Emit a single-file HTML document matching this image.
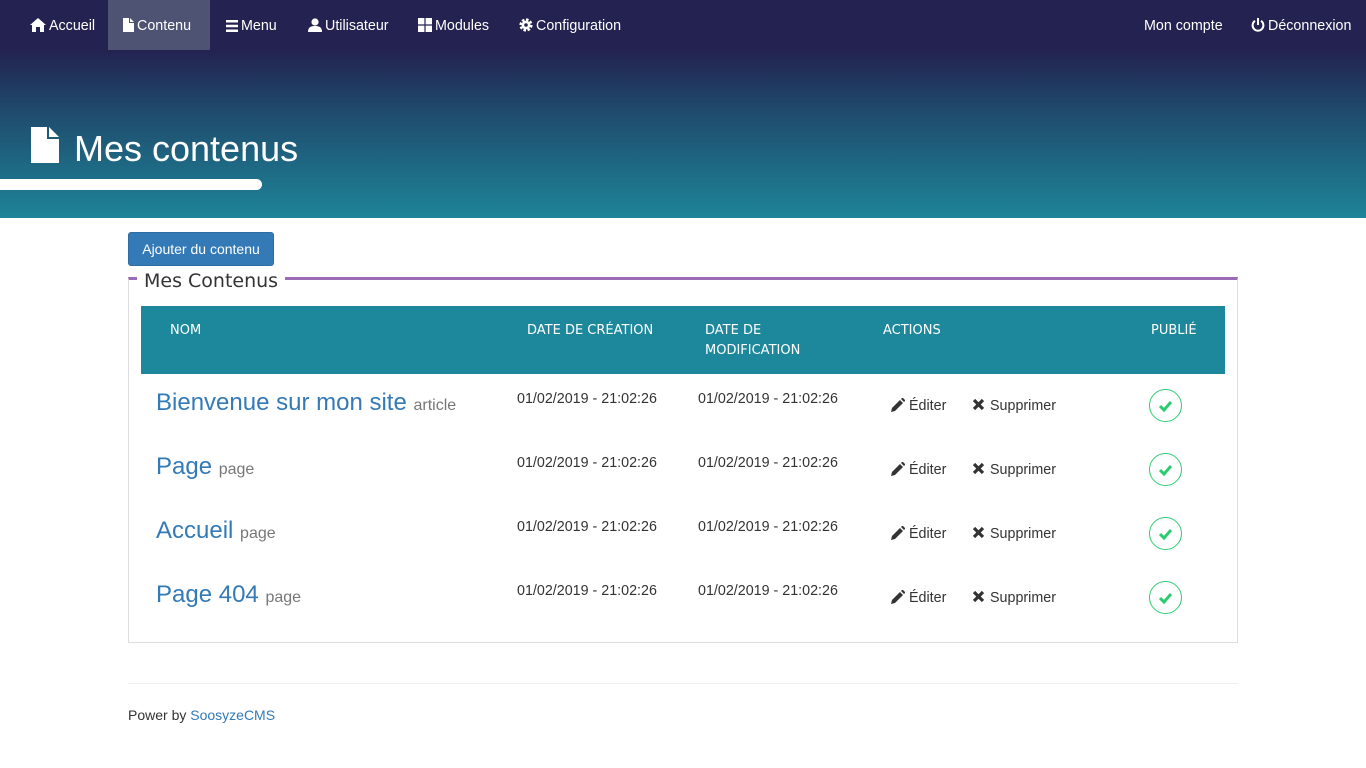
<!DOCTYPE html>
<html><head><meta charset="utf-8"><style>
*{margin:0;padding:0;box-sizing:border-box}
body{width:1366px;height:768px;font-family:"Liberation Sans",sans-serif;background:#fff;position:relative;overflow:hidden;color:#333;font-size:14px}
.hdr{position:absolute;left:0;top:0;width:1366px;height:218px;background:linear-gradient(#232250 0px,#232250 50px,#1f4a6c 110px,#1e8498 218px)}
.nav a{position:absolute;top:0;height:50px;line-height:52px;color:#fff;font-size:14.3px;text-decoration:none;white-space:nowrap}
.nav svg{vertical-align:-2px;margin-right:3px}
.act{background:#4f5373}
.bar{position:absolute;left:0;top:179px;width:262px;height:11px;background:#fff;border-radius:0 6px 6px 0}
h1{position:absolute;left:74px;top:128px;font-weight:normal;font-size:36px;color:#fff}
.btn{position:absolute;left:128px;top:232px;width:146px;height:34px;background:#337ab7;border:1px solid #2e6da4;border-radius:3px;color:#fff;font-size:14px;line-height:32px;text-align:center}
.box{position:absolute;left:128px;top:277px;width:1110px;height:366px;border:1px solid #ddd;border-top:3px solid #9b6bb5}
.leg{position:absolute;left:137px;top:269px;background:#fff;padding:0 7px;font-family:"DejaVu Sans",sans-serif;font-size:19px;color:#333;line-height:24px}
.th{position:absolute;left:141px;top:306px;width:1084px;height:68px;background:#1d889c}
.th span{position:absolute;top:15px;color:#fff;font-family:"DejaVu Sans",sans-serif;font-size:13px;line-height:20px}
.r{position:absolute;left:0;width:1366px;height:40px}
.t{position:absolute;left:156px;top:0;font-size:24px;color:#337ab7;white-space:nowrap}
.t small{font-size:16px;color:#777}
.d{position:absolute;top:0;font-size:14.3px;color:#333}
.e{position:absolute;top:8px;font-size:14.3px;color:#333}
.ok{position:absolute;left:1149px;top:0;width:33px;height:33px;border:1px solid #2ecc71;border-radius:50%}
.ft{position:absolute;left:128px;top:683px;width:1110px;border-top:1px solid #eee}
</style></head><body>
<div class="hdr"></div>
<div class="nav">
<a style="left:18px;padding:0 12px"><svg width="16" height="14" viewBox="0 0 16 14"><path d="M8 0L0 7h2v7h4V9h4v5h4V7h2z" fill="#fff"/></svg>Accueil</a>
<a class="act" style="left:108px;width:102px;padding-left:15px"><svg width="11" height="14" viewBox="0 0 11 14"><path d="M0 0h6v5h5v9H0zM7 0l4 4H7z" fill="#fff"/></svg>Contenu</a>
<a style="left:226px"><svg width="12" height="12" viewBox="0 0 12 12"><path d="M0 0h12v2.5H0zM0 4.75h12v2.5H0zM0 9.5h12V12H0z" fill="#fff"/></svg>Menu</a>
<a style="left:308px"><svg width="14" height="14" viewBox="0 0 14 14"><circle cx="7" cy="4" r="3.6" fill="#fff"/><path d="M0 14c0-5 3-6 7-6s7 1 7 6z" fill="#fff"/></svg>Utilisateur</a>
<a style="left:418px"><svg width="14" height="14" viewBox="0 0 14 14"><path d="M0 0h6.4v6.4H0zM7.6 0H14v6.4H7.6zM0 7.6h6.4V14H0zM7.6 7.6H14V14H7.6z" fill="#fff"/></svg>Modules</a>
<a style="left:519px"><svg width="14" height="14" viewBox="0 0 14 14"><circle cx="7" cy="7" r="5" fill="none" stroke="#fff" stroke-width="3.2" stroke-dasharray="2.4 1.5"/><circle cx="7" cy="7" r="4.4" fill="#fff"/><circle cx="7" cy="7" r="1.8" fill="#232250"/></svg>Configuration</a>
<a style="left:1144px">Mon compte</a>
<a style="left:1251px"><svg width="14" height="14" viewBox="0 0 14 14"><path d="M4 2.8A5.4 5.4 0 1 0 10 2.8" fill="none" stroke="#fff" stroke-width="2"/><path d="M7 0v7" stroke="#fff" stroke-width="2"/></svg>Déconnexion</a>
</div>
<svg style="position:absolute;left:31px;top:127px" width="28" height="36" viewBox="0 0 28 36"><path d="M0 0h16v12h12v24H0zM18 0l10 10H18z" fill="#fff"/></svg>
<h1>Mes contenus</h1>
<div class="bar"></div>
<div class="btn">Ajouter du contenu</div>
<div class="box"></div>
<div class="leg">Mes Contenus</div>
<div class="th"><span style="left:29px">NOM</span><span style="left:386px">DATE DE CRÉATION</span><span style="left:564px">DATE DE<br>MODIFICATION</span><span style="left:742px">ACTIONS</span><span style="left:1010px">PUBLIÉ</span></div>

<div class="r" style="top:389px"><div class="t">Bienvenue sur mon site <small>article</small></div></div>
<div class="r" style="top:453px"><div class="t">Page <small>page</small></div></div>
<div class="r" style="top:517px"><div class="t">Accueil <small>page</small></div></div>
<div class="r" style="top:581px"><div class="t">Page 404 <small>page</small></div></div>

<div id="rows"></div>
<script>
var tops=[391,455,519,583],h='';
tops.forEach(function(y){
h+='<div class="d" style="left:517px;top:'+y+'px">01/02/2019 - 21:02:26</div>'+
'<div class="d" style="left:698px;top:'+y+'px">01/02/2019 - 21:02:26</div>'+
'<div class="e" style="left:891px;top:'+(y+7)+'px"><svg width="14" height="14" viewBox="0 0 14 14" style="vertical-align:-2px;margin-right:4px"><path d="M0 14l1-4 8-8 3 3-8 8zM10 1l1.5-1.5 3 3L13 4z" fill="#333"/></svg>Éditer</div>'+
'<div class="e" style="left:972px;top:'+(y+7)+'px"><svg width="13" height="13" viewBox="0 0 13 13" style="vertical-align:-1px;margin-right:5px"><path d="M2 2l9 9M11 2l-9 9" stroke="#333" stroke-width="3.2"/></svg>Supprimer</div>'+
'<div class="ok" style="top:'+(y-2)+'px"><svg width="31" height="31" viewBox="0 0 31 31"><path d="M10 16l4 4 7-8" fill="none" stroke="#2ecc71" stroke-width="3"/></svg></div>';
});
document.getElementById('rows').innerHTML=h;
</script>
<div class="ft"></div>
<div style="position:absolute;left:128px;top:707px;font-size:14px;color:#333">Power by <span style="color:#337ab7">SoosyzeCMS</span></div>
</body></html>
